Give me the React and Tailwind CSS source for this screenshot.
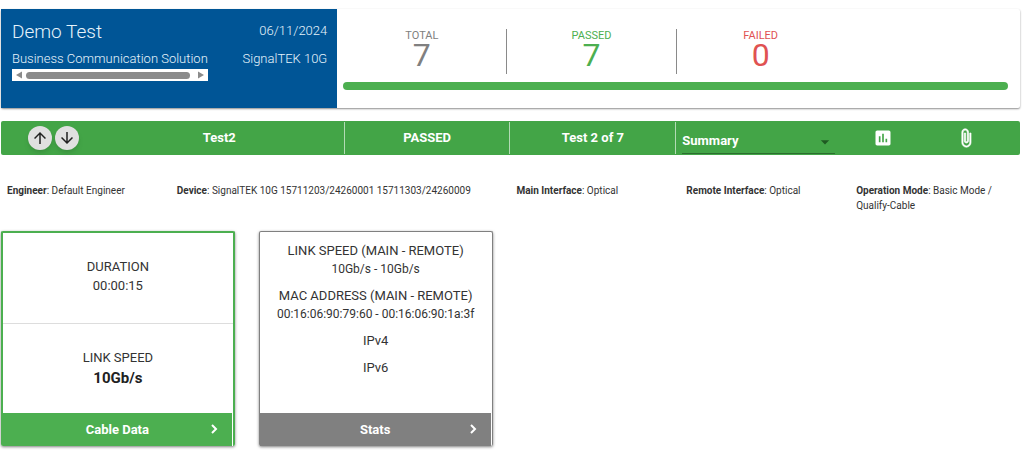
import React, { useState } from 'react';
import { MdArrowUpward, MdArrowDownward, MdInsertChart, MdArrowDropDown } from 'react-icons/md';

const totals = [
  { label: 'TOTAL', value: 7, className: 'text-[#808080]' },
  { label: 'PASSED', value: 7, className: 'text-[#4caf50] border-l border-[#8a8a8a]' },
  { label: 'FAILED', value: 0, className: 'text-[#e05252] border-l border-[#8a8a8a]' },
];

const details = [
  { label: 'Engineer', value: 'Default Engineer', span: 'col-span-2' },
  { label: 'Device', value: 'SignalTEK 10G 15711203/24260001 15711303/24260009', span: 'col-span-4' },
  { label: 'Main Interface', value: 'Optical', span: 'col-span-2' },
  { label: 'Remote Interface', value: 'Optical', span: 'col-span-2' },
  { label: 'Operation Mode', value: 'Basic Mode / Qualify-Cable', span: 'col-span-2' },
];

const RoundButton = ({ label, children }) => (
  <button
    aria-label={label}
    className="w-6 h-6 rounded-full bg-[#e0e0e0] text-[#212121] shadow-md flex items-center justify-center"
  >
    {children}
  </button>
);

// Horizontal scroll bar under the company name
const ScrollBar = () => (
  <div className="flex items-center gap-1 h-3 px-1 bg-white">
    <svg viewBox="0 0 6 8" className="w-[6px] h-2 fill-[#8b8b8b]"><path d="M6 0.5v7L0 4z" /></svg>
    <div className="flex-1 h-[7px] mr-1 rounded-full bg-[#8b8b8b]" />
    <svg viewBox="0 0 6 8" className="w-[6px] h-2 fill-[#8b8b8b]"><path d="M0 0.5v7L6 4z" /></svg>
  </div>
);

const Summary = () => (
  <section className="flex bg-white rounded-xs shadow-[0_1px_2px_rgba(0,0,0,0.45)]">
    <div className="w-[33%] flex justify-between bg-[#005596] text-[#e6f3fb] text-[13px] leading-[21px] font-light pl-[11px] pr-[10px] pt-[11px] pb-[27px]">
      <div>
        <h1 className="text-[19px] leading-6 mb-1">Demo Test</h1>
        <p>Business Communication Solution</p>
        <ScrollBar />
      </div>
      <div className="text-right">
        <p className="mb-[7px]">06/11/2024</p>
        <p>SignalTEK 10G</p>
      </div>
    </div>
    <div className="flex-1 pt-5 pr-[6px]">
      <div className="grid grid-cols-4">
        {totals.map((item) => (
          <div key={item.label} className={`h-[45px] text-center ${item.className}`}>
            <div className="text-[11px] leading-[14px]">{item.label}</div>
            <div className="text-[32px] leading-6">{item.value}</div>
          </div>
        ))}
      </div>
      <div className="h-2 mt-2 mx-[6px] rounded-full bg-[#4caf50]" />
    </div>
  </section>
);

const TestBar = () => {
  const [view, setView] = useState('Summary');

  return (
    <section className="grid grid-cols-12 items-center h-[34px] mt-[13px] pl-[11px] pr-[13px] rounded-xs bg-[#43a547] text-white text-[13px] font-bold text-center">
      <div className="flex justify-center gap-[3px]">
        <RoundButton label="Previous test"><MdArrowUpward className="w-[18px] h-[18px]" /></RoundButton>
        <RoundButton label="Next test"><MdArrowDownward className="w-[18px] h-[18px]" /></RoundButton>
      </div>
      <div className="col-span-3">Test2</div>
      <div className="col-span-2 h-8 leading-8 border-l border-white/60">PASSED</div>
      <div className="col-span-2 h-8 leading-8 border-l border-white/60">Test 2 of 7</div>
      <div className="col-span-2 h-8 px-[6px] border-l border-white/60">
        <div className="relative border-b border-[#2c6e30]">
          <select
            aria-label="View"
            value={view}
            onChange={(e) => setView(e.target.value)}
            className="w-full h-[31px] pt-[6px] appearance-none bg-transparent font-bold outline-none"
          >
            <option>Summary</option>
          </select>
          <MdArrowDropDown className="absolute right-0 bottom-px w-5 h-5 text-[#1f5a22] pointer-events-none" />
        </div>
      </div>
      <button aria-label="Chart" className="flex justify-center"><MdInsertChart className="w-5 h-5" /></button>
      <button aria-label="Attachments" className="flex justify-center">
        <svg viewBox="0 0 24 24" className="w-5 h-5 fill-white stroke-white stroke-[0.8]">
          <path d="M16.5 6v11.500c0 2.210-1.790 4-4 4s-4-1.790-4-4V5a2.500 2.500 0 0 1 5 0v10.500c0 .55-.45 1-1 1s-1-.45-1-1V6H10v9.500a2.500 2.500 0 0 0 5 0V5c0-2.210-1.790-4-4-4S7 2.790 7 5v12.500c0 3.040 2.460 5.500 5.500 5.500s5.500-2.460 5.500-5.500V6h-1.500z" />
        </svg>
      </button>
    </section>
  );
};

const Card = ({ title, border, footer, children }) => (
  <div className={`flex flex-col h-[215px] border-b-0 rounded-xs shadow-[0_1px_3px_rgba(0,0,0,0.5)] ${border}`}>
    <div className="flex-1 flex flex-col text-center text-[13px] text-[#333]">{children}</div>
    <button className={`relative h-[33px] mr-px text-[13px] font-bold text-white ${footer}`}>
      {title}
      <svg viewBox="0 0 20 20" className="absolute right-2 top-[6px] w-5 h-5 fill-none stroke-white stroke-2">
        <path d="M8 6l4 4-4 4" />
      </svg>
    </button>
  </div>
);

export default function App() {
  return (
    <main className="pt-[9px] pl-px pr-1 pb-2 font-[Roboto,sans-serif] text-[#333]">
      <Summary />
      <TestBar />

      <section className="grid grid-cols-12 pt-7 text-[10px] leading-[15px]">
        {details.map((d) => (
          <p key={d.label} className={`px-[6px] ${d.span}`}>
            <b>{d.label}</b>: {d.value}
          </p>
        ))}
      </section>

      <section className="grid grid-cols-4 gap-6 pr-3 mt-[18px]">
        <Card title="Cable Data" border="border-2 border-[#4caf50]" footer="bg-[#4caf50]">
          <div className="flex-1 flex flex-col justify-center leading-[19px]">
            <p>DURATION</p>
            <p className="mb-1">00:00:15</p>
          </div>
          <div className="flex-1 flex flex-col justify-center leading-[21px] border-t border-[#ddd]">
            <p>LINK SPEED</p>
            <p className="text-[15px] font-bold text-[#212121]">10Gb/s</p>
          </div>
        </Card>
        <Card title="Stats" border="border border-[#808080]" footer="bg-[#808080]">
          <div className="flex flex-col gap-[9px] pt-[10px] leading-[18px]">
            <div>
              <p>LINK SPEED (MAIN - REMOTE)</p>
              <p className="text-xs leading-[18px]">10Gb/s - 10Gb/s</p>
            </div>
            <div>
              <p>MAC ADDRESS (MAIN - REMOTE)</p>
              <p className="text-xs leading-[18px]">00:16:06:90:79:60 - 00:16:06:90:1a:3f</p>
            </div>
            <p>IPv4</p>
            <p>IPv6</p>
          </div>
        </Card>
      </section>
    </main>
  );
}
